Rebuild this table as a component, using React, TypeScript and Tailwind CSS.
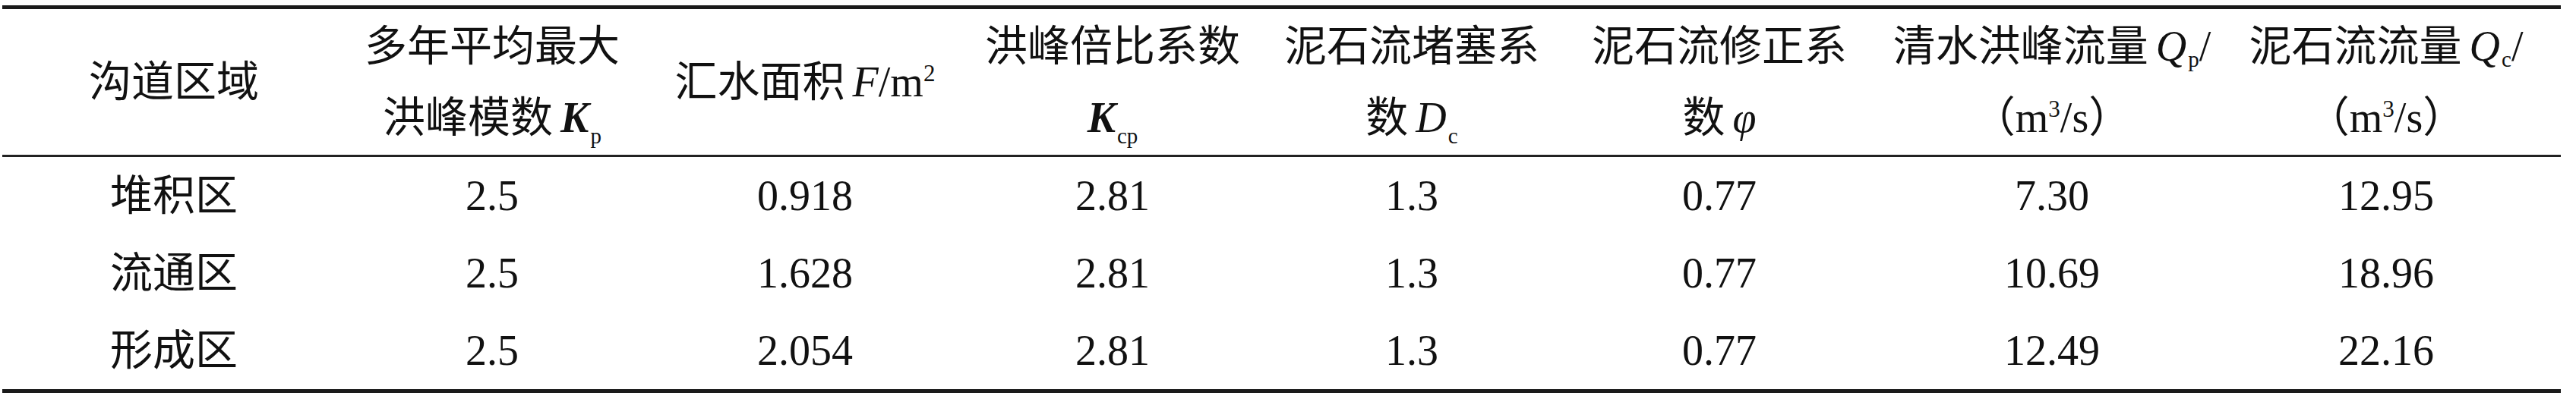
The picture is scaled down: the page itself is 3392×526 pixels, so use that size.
import React from 'react'

const COLS = 'grid grid-cols-[437px_416px_408px_402px_386px_424px_452px_444px]'

interface Row {
  area: string
  values: string[]
}

const ROWS: Row[] = [
  { area: '堆积区', values: ['2.5', '0.918', '2.81', '1.3', '0.77', '7.30', '12.95'] },
  { area: '流通区', values: ['2.5', '1.628', '2.81', '1.3', '0.77', '10.69', '18.96'] },
  { area: '形成区', values: ['2.5', '2.054', '2.81', '1.3', '0.77', '12.49', '22.16'] },
]

// subscript / superscript helpers, kept out of the line box height
const Sub = ({ children, offset = 'top-[15px]' }: { children: React.ReactNode; offset?: string }) => (
  <span className={`relative ${offset} ml-[2px] text-[29px] leading-none not-italic font-normal`}>{children}</span>
)

const Sup = ({ children }: { children: React.ReactNode }) => (
  <span className="relative -top-[20px] text-[31px] leading-none">{children}</span>
)

function HeadCell({ lines, className = '' }: { lines: React.ReactNode[]; className?: string }) {
  return (
    <div className={`flex flex-col items-center justify-center text-center whitespace-nowrap ${className}`}>
      {lines.map((line, i) => (
        <div key={i} className="leading-[94px]">
          {line}
        </div>
      ))}
    </div>
  )
}

export default function App() {
  return (
    <div className="min-h-screen bg-white pt-[7px] pl-[3px] text-[#111] font-['Liberation_Serif','Noto_Sans_CJK_SC',serif] text-[56px]">
      <div className="w-[3369px] border-t-[5px] border-b-[5px] border-[#1a1a1a]">
        {/* header */}
        <div className={`${COLS} h-[195px] border-b-[3px] border-[#222]`}>
          <HeadCell lines={['沟道区域']} className="pl-[15px]" />
          <HeadCell
            lines={[
              '多年平均最大',
              <>
                洪峰模数<span className="ml-[10px] italic font-bold">K</span>
                <Sub>p</Sub>
              </>,
            ]}
          />
          <HeadCell
            lines={[
              <>
                汇水面积<span className="ml-[10px] italic">F</span>/m<Sup>2</Sup>
              </>,
            ]}
          />
          <HeadCell
            lines={[
              '洪峰倍比系数',
              <>
                <span className="italic font-bold">K</span>
                <Sub>cp</Sub>
              </>,
            ]}
          />
          <HeadCell
            lines={[
              '泥石流堵塞系',
              <>
                数<span className="ml-[10px] italic">D</span>
                <Sub>c</Sub>
              </>,
            ]}
          />
          <HeadCell
            lines={[
              '泥石流修正系',
              <>
                数<span className="ml-[10px] italic">φ</span>
              </>,
            ]}
          />
          <HeadCell
            lines={[
              <>
                清水洪峰流量<span className="ml-[10px] italic">Q</span>
                <Sub offset="top-[8px]">p</Sub>/
              </>,
              <>
                （m<Sup>3</Sup>/s）
              </>,
            ]}
          />
          <HeadCell
            className="pr-[16px]"
            lines={[
              <>
                泥石流流量<span className="ml-[10px] italic">Q</span>
                <Sub offset="top-[8px]">c</Sub>/
              </>,
              <>
                （m<Sup>3</Sup>/s）
              </>,
            ]}
          />
        </div>

        {/* body */}
        {ROWS.map((row) => (
          <div key={row.area} className={`${COLS} h-[102px] items-center text-center leading-none`}>
            <div className="pl-[15px]">{row.area}</div>
            {row.values.map((v, i) => (
              <div key={i} className={i === row.values.length - 1 ? 'pr-[16px]' : ''}>
                {v}
              </div>
            ))}
          </div>
        ))}
      </div>
    </div>
  )
}
